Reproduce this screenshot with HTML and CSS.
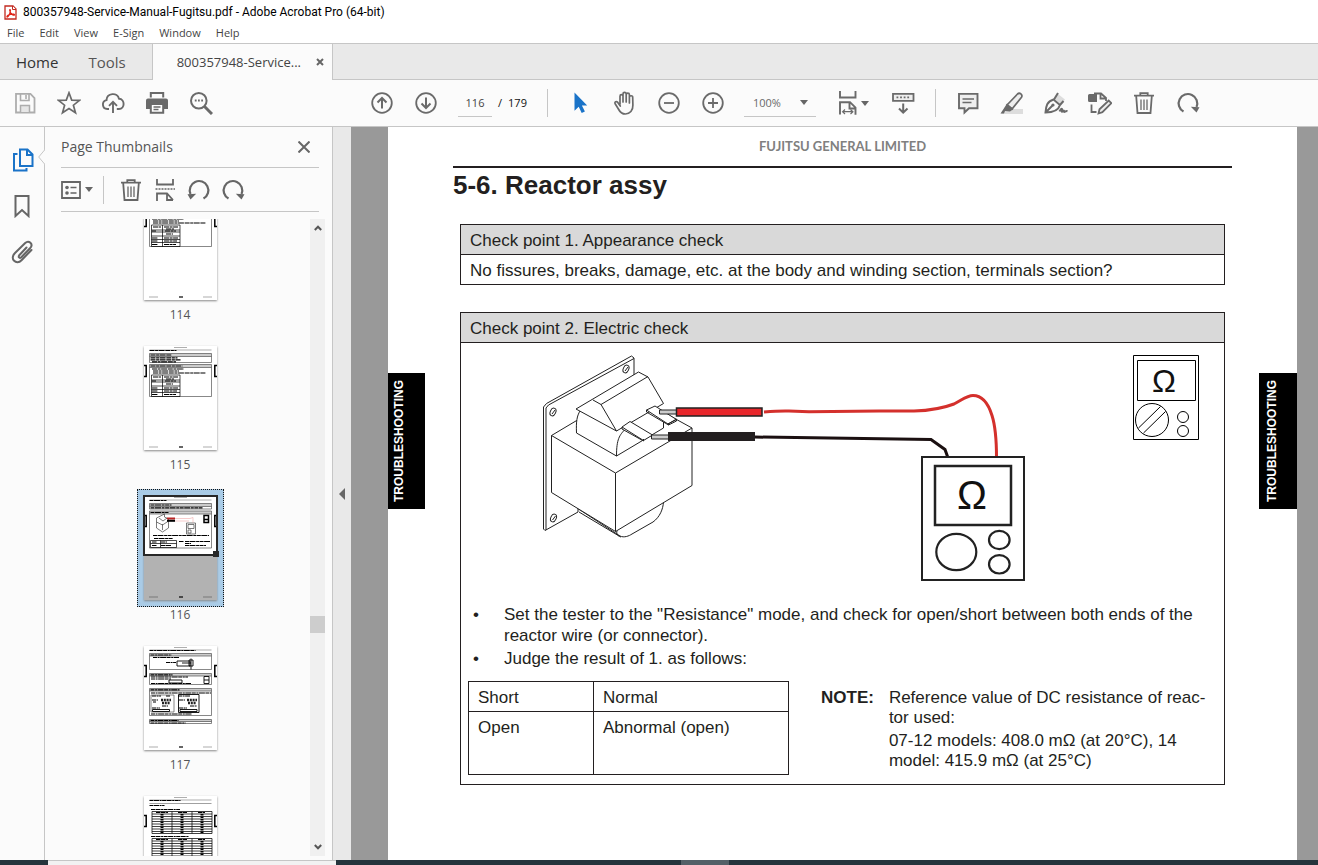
FILE: index.html
```html
<!DOCTYPE html>
<html lang="en">
<head>
<meta charset="utf-8">
<title>800357948-Service-Manual-Fugitsu.pdf - Adobe Acrobat Pro (64-bit)</title>
<link rel="stylesheet" href="styles.css">
</head>
<body>
<svg class="defs" aria-hidden="true">
  <defs>
    <symbol id="i-trash" viewBox="0 0 24 24"><g fill="none" stroke="currentColor" stroke-width="1.8"><path d="M2 4.700h20M8.300 4.500v-2.300h7.400v2.300M4.200 5l1.300 17h13l1.300-17"/><path stroke-width="1.300" d="M9 8.500v10.500M12 8.500v10.500M15 8.500v10.500"/></g></symbol>
    <symbol id="i-redo" viewBox="0 0 24 24"><path fill="none" stroke="currentColor" stroke-width="2.200" d="M7.500 20.500A9.300 9.300 0 1 1 20.500 16"/><path fill="currentColor" d="M14.800 15.800l8.700.5-3 5.200z"/></symbol>
    <symbol id="p-frame" viewBox="0 0 73 104">
      <path fill="#fff" d="M0 0h73v104H0z"/>
      <path stroke="#777" stroke-width=".6" d="M30 1.500h13M5 101h9M59 101h9M5.500 4h62"/>
      <path stroke="#000" stroke-width="1.200" d="M35 101h4"/>
      <path fill="none" stroke="#000" stroke-width="1.500" d="M0 19.500h2.200v11H0M73 19.500h-2.200v11h2.200"/>
    </symbol>
    <symbol id="p-spec" viewBox="0 0 73 104">
      <use href="#p-frame"/>
      <path fill="#ccc" d="M5.500 7.500h62v3h-62zM5.500 18.500h62v3h-62z"/>
      <path fill="none" stroke="#555" stroke-width=".7" d="M5.500 7.500h62v9h-62zM5.500 10.500h62M5.500 18.500h62v32h-62zM5.500 21.500h62"/>
      <path fill="none" stroke="#000" stroke-width="1.200" stroke-dasharray="5 .6 3 .5 6 .7" d="M5.500 4.500h27M6.500 9h21M6.500 11.800h27M6.500 13.800h30M8 15.800h24M6.500 20h32M8 23h32M9 25h26M9 27h53M9 31h8M20 31h14M22 33h8M8 35h4M21 35h11M22 38h7M8 42h6M20 42h14M8 45h6M20 45h13M8 48.500h6M20 48.500h12"/>
      <path fill="none" stroke="#000" stroke-width=".7" d="M7.500 29h28.500v21.500H7.500zM18.500 29v21.500M7.500 34h28.500M7.500 36h28.500M7.500 40h28.500M7.500 43.500h28.500M7.500 46.500h28.500"/>
    </symbol>
    <symbol id="p-reactor" viewBox="0 0 73 104">
      <use href="#p-frame"/>
      <path fill="#ccc" d="M5.500 7.500h62v3h-62zM5.500 15h62v3h-62z"/>
      <path fill="none" stroke="#555" stroke-width=".7" d="M5.500 7.500h62v5.500h-62zM5.500 10.500h62M5.500 15h62v37h-62zM5.500 18h62"/>
      <path fill="none" stroke="#000" stroke-width="1.200" stroke-dasharray="4 .5 6 .6 3 .5" d="M5.500 4.500h17M6.500 9h21M6.500 11.800h52M6.500 16.500h18M9 39.500h56M10 42.500h19M8 46h5M17 46h6M35 45.500h5M41 45.500h25M41 47.500h6M41 49.500h21M8 49.500h5M17 49.500h10"/>
      <path fill="none" stroke="#000" stroke-width=".7" d="M6.500 44.500h26v7h-26zM16.500 44.500v7M6.500 47.500h26"/>
      <path fill="none" stroke="#444" stroke-width=".7" d="M12.500 22l8-4v3l4 2v9l-6 4-6-4zM12.500 26l6 3 6-4M15 22l4 3 4-3M18.500 28v6M42.500 27h9v11h-9zM44 28.500h6v4h-6zM44 34h3v3h-3z"/>
      <path stroke="#b22" stroke-width="2" d="M23 22.500h8"/><path stroke="#000" stroke-width="2" d="M23 24.800h8"/><path fill="none" stroke="#e99" stroke-width=".5" d="M31 22.500h15l3-1v5M31 25h14"/>
      <path fill="none" stroke="#000" stroke-width="1.500" d="M60 19.500h4.500v7H60zM60 23.500h4"/>
    </symbol>
    <symbol id="p-motor" viewBox="0 0 73 104">
      <use href="#p-frame"/>
      <path fill="#ccc" d="M5.500 7.500h62v2.500h-62zM5.500 27.500h62v2.500h-62zM5.500 42.500h62v2.500h-62zM5.500 73.500h62v2.500h-62z"/>
      <path fill="none" stroke="#555" stroke-width=".7" d="M5.500 7.500h62v16h-62zM5.500 10h62M5.500 27.500h62v11h-62zM5.500 30h62M5.500 42.500h62v27h-62zM5.500 45h62M5.500 73.500h62v4h-62zM5.500 75.500h62M7 49h23v17H7z"/>
      <path fill="none" stroke="#000" stroke-width="1.200" stroke-dasharray="4 .6 2 .5 6 .5" d="M5.500 4.500h46M6.500 9h21M9 11.500h26M22 16.500h10M6.500 28.800h22M7 31h37M7 33h20M7 37.500h40M6.500 43.800h29M7 47h60M8 50h9M22 50h4M8 54h6M9 56h3M18 60h6M34 50h12M35 54h6M46 60h7M8 62h8M35 62h8M7 68h41M6.500 74.500h28M6.500 77h35"/>
      <path fill="none" stroke="#000" stroke-width=".9" d="M33 15h13v5H33zM38 17h9M47 12.500v11M45 14h4v6h-4zM25 34h13v3H25zM8.500 63.500h17v2h-17zM36 63.500h17v2H36zM60 30.500h5v7h-5zM60 34h5M34.500 48.500h20.500v18H34.500z"/>
      <path fill="none" stroke="#222" stroke-width="2.500" stroke-dasharray="2 .8" d="M17 54h10M18 57h8M43 54h10M44 57h8"/>
    </symbol>
    <symbol id="p-tables" viewBox="0 0 73 104">
      <use href="#p-frame"/>
      <path fill="none" stroke="#777" stroke-width=".7" d="M5.500 7.500h62"/>
      <path fill="none" stroke="#000" stroke-width="1.200" stroke-dasharray="4 .5 5 .6 2 .5" d="M5.500 4.500h31M5.500 9.500h15M7 13.500h29M7 40.500h38M12 16.500h12M34 16.500h9M54 16.500h7M12 43.500h12M34 43.500h9M54 43.500h7"/>
      <path fill="none" stroke="#111" stroke-width=".8" d="M8 15.500h60v22H8zM28 15.500v22M48 15.500v22M8 18h60M8 20.500h60M8 23h60M8 25.500h60M8 28h60M8 30.500h60M8 33h60M8 35.500h60M8 42.500h60v22H8zM28 42.500v22M48 42.500v22M8 45h60M8 47.500h60M8 50h60M8 52.500h60M8 55h60M8 57.500h60M8 60h60"/>
      <path fill="none" stroke="#000" stroke-width="3" stroke-dasharray="1.600 .9" d="M18 18v19M38 18v19M58 18v19M18 45v19M38 45v19M58 45v19"/>
    </symbol>
  </defs>
</svg>

<header class="titlebar">
  <svg class="app-icon" viewBox="0 0 13 15"><path fill="#fff" stroke="#c22a20" stroke-width="1.300" d="M1 1h8l3 3v10H1z"/><path fill="#fff" stroke="#c22a20" d="M8.500 1v3.500H12"/><path fill="none" stroke="#e02418" stroke-width="1.200" d="M6 4.500c-1 0 .3 3 1.200 4.200 1 1.300 3.300 2 3.300 1 0-1-4-.5-5.500.2-1.500.6-2.500 1.600-2 2.100.8.600 2.200-2.200 2.800-3.800C6.400 6.400 6.800 4.500 6 4.500z"/></svg>
  <span>800357948-Service-Manual-Fugitsu.pdf - Adobe Acrobat Pro (64-bit)</span>
</header>

<nav class="menubar" aria-label="Menu">
  <button>File</button><button>Edit</button><button>View</button><button>E-Sign</button><button>Window</button><button>Help</button>
</nav>

<div class="tabs">
  <button class="tab">Home</button>
  <button class="tab tab-tools">Tools</button>
  <div class="tab-doc">
    <button class="tab-name">800357948-Service...</button>
    <button class="tab-close" aria-label="Close tab"><svg viewBox="0 0 8 8"><path stroke="currentColor" stroke-width="2" d="M1 1l6 6M7 1L1 7"/></svg></button>
  </div>
</div>

<div class="toolbar">
  <div class="group group-file">
    <button class="tool dim" aria-label="Save"><svg viewBox="0 0 24 24"><path fill="none" stroke="currentColor" stroke-width="1.800" d="M3 2.900h14.500L21.500 7v14.500H3z"/><path fill="none" stroke="currentColor" stroke-width="1.600" d="M7.500 3v6.500h8.500V3M13 4v4"/><path fill="#e6e6e6" stroke="currentColor" stroke-width="1.500" d="M7.500 21v-6.500h9V21"/></svg></button>
    <button class="tool" aria-label="Star"><svg viewBox="0 0 24 24"><path fill="none" stroke="currentColor" stroke-width="1.700" stroke-linejoin="miter" d="M12 1.800l2.700 7.300 7.800.3-6.100 4.800 2.100 7.600-6.500-4.300-6.500 4.300 2.100-7.600L1.500 9.400l7.800-.3z"/></svg></button>
    <button class="tool" aria-label="Upload"><svg viewBox="0 0 24 24"><path fill="none" stroke="currentColor" stroke-width="1.900" d="M8 18H6.300a4.500 4.500 0 0 1-.8-8.900c.4-7.400 11-8 12.500-1.400 6.300.4 6 10.300 0 10.300h-2.200M12 22V11M8 14.800l4-4 4 4"/></svg></button>
    <button class="tool" aria-label="Print"><svg viewBox="0 0 24 24"><path fill="none" stroke="currentColor" stroke-width="2" d="M5.800 6.500V2h12.400v4.500"/><path fill="currentColor" d="M3 7.500h18a2 2 0 0 1 2 2V18H1V9.500a2 2 0 0 1 2-2z"/><path fill="#fff" stroke="currentColor" stroke-width="2" d="M5.800 13h12.400v8.800H5.800z"/><path stroke="currentColor" stroke-width="1.400" d="M8.500 16h7M8.500 18.500h5"/></svg></button>
    <button class="tool" aria-label="Search"><svg viewBox="0 0 24 24"><circle cx="9.800" cy="9.800" r="7.800" fill="none" stroke="currentColor" stroke-width="2"/><path stroke="currentColor" stroke-width="3" d="M15.500 15.500l7.500 7.500"/><path stroke="currentColor" stroke-width="1.800" stroke-dasharray="1.800 1.400" d="M5.800 9.500h9"/></svg></button>
  </div>
  <div class="group">
    <button class="tool" aria-label="Previous page"><svg viewBox="0 0 24 24"><g fill="none" stroke="currentColor" stroke-width="1.800"><circle cx="12" cy="12" r="9.800"/><path stroke-width="2" d="M12 17.500v-10M7.500 11.500L12 7l4.500 4.500"/></g></svg></button>
    <button class="tool" aria-label="Next page"><svg viewBox="0 0 24 24"><g fill="none" stroke="currentColor" stroke-width="1.800"><circle cx="12" cy="12" r="9.800"/><path stroke-width="2" d="M12 6.500v10M7.500 12.500L12 17l4.500-4.500"/></g></svg></button>
  </div>
  <div class="pager">
    <input id="page-no" type="text" value="116" aria-label="Page number">
    <label for="page-no"><span>/</span><span>179</span></label>
  </div>
  <span class="sep"></span>
  <div class="group">
    <button class="tool active" aria-label="Select"><svg viewBox="0 0 24 24"><path fill="currentColor" d="M5.500 1.500v18.200l4.200-4 3 6.300 3.200-1.400-3-6.200h5.300z"/></svg></button>
    <button class="tool" aria-label="Pan"><svg viewBox="0 0 24 24"><path fill="none" stroke="currentColor" stroke-width="1.700" stroke-linecap="round" stroke-linejoin="round" d="M7 13V5.200a1.500 1.500 0 0 1 3 0V11V3a1.500 1.500 0 0 1 3.200 0v8V3.800a1.500 1.500 0 0 1 3.200 0V12V6.300a1.500 1.500 0 0 1 3.300.2l.2 7.500c.2 5.500-3 9-7.500 9-4 0-5.500-2-7-5L2 12.500c-.6-1.800 1.400-2.600 2.600-1.300L7.300 15"/></svg></button>
    <button class="tool" aria-label="Zoom out"><svg viewBox="0 0 24 24"><g fill="none" stroke="currentColor" stroke-width="1.800"><circle cx="12" cy="12" r="9.800"/><path d="M7 12h10"/></g></svg></button>
    <button class="tool" aria-label="Zoom in"><svg viewBox="0 0 24 24"><g fill="none" stroke="currentColor" stroke-width="1.800"><circle cx="12" cy="12" r="9.800"/><path d="M7 12h10M12 7v10"/></g></svg></button>
  </div>
  <div class="zoom"><select aria-label="Zoom level"><option>100%</option></select><span class="caret"></span></div>
  <div class="group">
    <button class="tool tool-menu" aria-label="Fit page"><svg viewBox="0 0 24 24"><g fill="none" stroke="currentColor" stroke-width="1.900"><path d="M4 0v6.500h15.500V0M4 23.500V11.200h10l5.500 5.500v7M13.500 11.500v6h6"/><path stroke-width="1.200" d="M6.500 20.700h10.500M9 18.500l-2.400 2.200L9 23M14.500 18.500l2.400 2.200-2.400 2.300"/></g></svg><span class="caret"></span></button>
    <button class="tool" aria-label="Scroll mode"><svg viewBox="0 0 24 24"><g fill="none" stroke="currentColor" stroke-width="1.800"><path fill="#eee" d="M2 2.900h20.500v7H2z"/><path stroke-dasharray="1.800 1.800" d="M5.500 6.400h13.500"/><path stroke-width="2" d="M12.200 12.500v9M8 17.500l4.200 4.200 4.300-4.200"/></g></svg></button>
  </div>
  <span class="sep sep-tight"></span>
  <div class="group">
    <button class="tool" aria-label="Comment"><svg viewBox="0 0 24 24"><g fill="#eee" stroke="currentColor" stroke-width="1.900"><path d="M3 2.900h18.500v14.300H13l-4.500 4.300v-4.300H3z"/><path stroke-width="1.400" d="M6.500 8h11.500M6.500 11.500h9"/></g></svg></button>
    <button class="tool" aria-label="Highlight"><svg viewBox="0 0 24 24"><path fill="#ddd" d="M6 18h17v5H1z"/><path fill="#eee" stroke="currentColor" stroke-width="1.700" d="M7 14L17.500 3c2.200-2 5.500.8 4 3.300L12 18z"/><path fill="currentColor" d="M7 12.500l6.500 5.500-3.500 2.500-5-.5-1 2.500H.500l3-4.500z"/></svg></button>
    <button class="tool" aria-label="Sign"><svg viewBox="0 0 24 24"><path fill="#ddd" d="M14 3l7 5.500-4.500 5L10.500 8z"/><g fill="none" stroke="currentColor" stroke-width="2"><path d="M1.500 21.500C2 15 3 10.500 9.500 8.500l6.500 5.500c-1.500 5-7 7.500-14.500 7.500zM1.500 21.500l7-7M10 8.500L14 2M15.500 14.500l4-4.500"/><path stroke-width="2" d="M15.500 20.500c2-4 3-3 2.500-.5s2-2 2 .2 1.500-.7 3.500 0"/></g><circle cx="9" cy="14" r="1.600" fill="currentColor"/></svg></button>
    <button class="tool" aria-label="Edit"><svg viewBox="0 0 24 24"><path fill="currentColor" d="M1.500 3H9v8H1.500A1.500 1.500 0 0 1 0 9.500v-5A1.500 1.500 0 0 1 1.500 3z"/><g fill="none" stroke="currentColor" stroke-width="1.800"><path d="M6 2.500h7l5 4.500v3M12.500 2.500v5h5.500M3.500 13.500v7.500h5"/><path fill="#eee" d="M10.500 22.500l1-4.200L20.700 9.500l2.700 2.700-9 9z"/></g></svg></button>
    <button class="tool" aria-label="Delete"><svg><use href="#i-trash"/></svg></button>
    <button class="tool" aria-label="Rotate"><svg><use href="#i-redo"/></svg></button>
  </div>
</div>

<main class="workspace">
  <nav class="rail" aria-label="Panels">
    <button class="active" aria-label="Page Thumbnails"><svg viewBox="0 0 24 24"><g fill="none" stroke="currentColor" stroke-width="2"><path d="M9 1.500h7.500l5 5V18H9zM16 2v5h5"/><path d="M6.500 6H3v16.500h12.500V20"/></g></svg></button>
    <button aria-label="Bookmarks"><svg viewBox="0 0 24 24"><path fill="none" stroke="currentColor" stroke-width="2" d="M4.500 2h13v20L11 16l-6.500 6z"/></svg></button>
    <button aria-label="Attachments"><svg viewBox="0 0 24 24"><path fill="none" stroke="currentColor" stroke-width="2" stroke-linecap="round" d="M15.500 7.500l-7 7.500c-1.700 2-.2 3.800 1.800 2.200l8.700-8.900c4-4.300-1.300-8.500-4.800-5.200L4 13c-6 6 1.500 12.500 6.500 7.200L20.500 10"/></svg></button>
    <svg class="notch" viewBox="0 0 7 16"><path fill="#fbfbfb" stroke="#c6c6c6" d="M7 .5L.7 8 7 15.500"/></svg>
  </nav>

  <aside class="panel">
    <div class="panel-head"><h2>Page Thumbnails</h2><button aria-label="Close panel"><svg viewBox="0 0 12 12"><path stroke="currentColor" stroke-width="2" d="M.5.5l11 11M11.500.5l-11 11"/></svg></button></div>
    <div class="panel-tools">
      <button class="options" aria-label="Options"><svg viewBox="0 0 20 18"><path fill="none" stroke="currentColor" stroke-width="1.800" d="M1 1h18v16H1z"/><path stroke="currentColor" stroke-width="1.500" d="M9.500 6.500h6M9.500 12h6"/><circle cx="6" cy="6.500" r="1.800" fill="currentColor"/><circle cx="6" cy="12" r="1.800" fill="currentColor"/></svg><span class="caret"></span></button>
      <span class="panel-sep"></span>
      <button aria-label="Delete pages"><svg><use href="#i-trash"/></svg></button>
      <button aria-label="Split pages"><svg viewBox="0 0 24 24"><g fill="none" stroke="currentColor" stroke-width="1.800"><path d="M4 1v5.500h16V1M4 23v-7.500h10l6 6.500M14 16v6h6"/><path stroke-width="1.500" stroke-dasharray="2 1" d="M2.500 11h19.500"/></g></svg></button>
      <button class="flip" aria-label="Rotate left"><svg><use href="#i-redo"/></svg></button>
      <button aria-label="Rotate right"><svg><use href="#i-redo"/></svg></button>
    </div>
    <div class="thumb-area">
      <ol class="thumbs">
        <li><button class="thumb" aria-label="Page 114"><svg><use href="#p-spec"/></svg></button><span>114</span></li>
        <li><button class="thumb" aria-label="Page 115"><svg><use href="#p-spec"/></svg></button><span>115</span></li>
        <li class="selected"><button class="thumb" aria-label="Page 116"><svg><use href="#p-reactor"/></svg><i class="shade"></i><i class="view"></i></button><span>116</span></li>
        <li><button class="thumb" aria-label="Page 117"><svg><use href="#p-motor"/></svg></button><span>117</span></li>
        <li><button class="thumb" aria-label="Page 118"><svg><use href="#p-tables"/></svg></button></li>
      </ol>
      <div class="scrollbar">
        <svg viewBox="0 0 8 6"><path fill="none" stroke="#555" stroke-width="2" d="M.8 5L4 1.700 7.200 5"/></svg>
        <i class="grip"></i>
        <svg viewBox="0 0 8 6"><path fill="none" stroke="#555" stroke-width="2" d="M.8 1L4 4.300 7.200 1"/></svg>
      </div>
    </div>
  </aside>

  <button class="splitter" aria-label="Collapse panel"><svg viewBox="0 0 6 12"><path fill="#666" d="M6 0v12L0 6z"/></svg></button>

  <section class="viewer">
    <article class="page">
      <p class="brand">FUJITSU GENERAL LIMITED</p>
      <h1>5-6. Reactor assy</h1>
      <section class="check">
        <h3>Check point 1. Appearance check</h3>
        <p class="check-text">No fissures, breaks, damage, etc. at the body and winding section, terminals section?</p>
      </section>
      <section class="check">
        <h3>Check point 2. Electric check</h3>
        <svg class="figure" viewBox="461 343 763 260" role="img" aria-label="Reactor measured with a tester">
          <g fill="#fff" stroke="#222" stroke-width="1" stroke-linejoin="round">
            <path d="M578 512l-33 18.500-1.500-1.500V407l3-3.500 85-47.500 2.500 2v66l-56 60z"/>
            <path fill="none" d="M546 530V408l2.500-3L634 358.500"/>
            <ellipse cx="553" cy="412" rx="2.700" ry="4" transform="rotate(25 553 412)"/><ellipse cx="626" cy="369" rx="2.700" ry="4" transform="rotate(25 626 369)"/><ellipse cx="553.500" cy="518" rx="2.700" ry="4" transform="rotate(25 553.500 518)"/>
            <path fill="none" d="M552 414l3-4M625 371l3-4M552.500 520l3-4"/>
            <path d="M577 508l43 28c4 2 9 0 12-2l21-12c7-5 10-13 10.500-20z"/>
            <path fill="none" d="M579 512l40 24M617 531c-1 3 1 5 4 6"/>
            <path d="M551.500 435.500l26-15.500 60-22 54.500 30v57.500l-76.500 46-64-39z"/>
            <path fill="none" d="M551.500 435.500l64 37.500 76.500-45M615.500 473v58.500"/>
            <path stroke="none" d="M580 411c-3 5-4 10-3.500 22l40 23 47-28v-30z"/>
            <path fill="none" d="M580 411c-3 5-4 10-3.500 22l40 23 47-28v-6"/>
            <path fill="none" d="M616.500 456c0-17 3-21 9-27"/>
            <path d="M576 409l62.500-37 9.500 5 15.500 26.500L616.500 431z"/>
            <path fill="none" d="M593 400l8 4.500 15.500 26.500M601 404.500l47-28"/>
            <path d="M622 427l8-5.500 22.500 13.500-9 5.500zM622 427v2l21.500 12v-2M646.500 410l8.500-4 21.500 13.500-8.500 4.500z"/>
            <path fill="none" d="M646.500 410v2l22 13v-2M668 424l8.500-5v2l-8 4"/>
          </g>
          <path fill="#ccc" stroke="#222" d="M659.500 410h17v4h-17zM651.500 435h17v4h-17z"/>
          <path fill="#e8262b" stroke="#222" stroke-width="1.500" d="M676.500 408h85.500v8h-85.500z"/>
          <path fill="#231f20" d="M668 432h87v9h-87z"/>
          <path fill="none" stroke="#d4302c" stroke-width="3" d="M764 412c12-1 16-1.300 25-1l20 .7 70-.7h35c17-.5 27-2 40-7 8-4 13-8.500 19-8.500 8 0 15 7 19 20 3.500 11 4.500 25 4.500 42"/>
          <path fill="none" stroke="#1b1011" stroke-width="3" d="M755 437l176 2.500 14 10 2.500 7"/>
          <path fill="#fff" stroke="#222" stroke-width="2" d="M922 457h102v123H922z"/>
          <path fill="none" stroke="#222" stroke-width="2.500" d="M935 466h76v59h-76z"/>
          <g fill="none" stroke="#222" stroke-width="2.200"><ellipse cx="956.300" cy="552" rx="20" ry="18.200"/><ellipse cx="999.300" cy="540" rx="10.300" ry="9.200"/><ellipse cx="999.300" cy="564.300" rx="10.300" ry="9.200"/></g>
          <text class="ohm ohm-lg" x="972" y="509">Ω</text>
          <g fill="none" stroke="#000"><path d="M1133.500 355.500h65v84h-65zM1137.500 360.500h58v40h-58z"/><circle cx="1152" cy="420" r="16.500"/><path d="M1160.500 406.500l-22 21.500M1165.500 411.500l-22 21.500"/><circle cx="1183" cy="417" r="5.500"/><circle cx="1183" cy="431" r="5.500"/></g>
          <text class="ohm ohm-sm" x="1164" y="392">Ω</text>
        </svg>
        <ul class="steps">
          <li>Set the tester to the "Resistance" mode, and check for open/short between both ends of the reactor wire (or connector).</li>
          <li>Judge the result of 1. as follows:</li>
        </ul>
        <div class="result">
          <table>
            <tr><td>Short</td><td>Normal</td></tr>
            <tr class="tall"><td>Open</td><td>Abnormal (open)</td></tr>
          </table>
          <dl class="note">
            <dt>NOTE:</dt>
            <dd><p>Reference value of DC resistance of reac-<br>tor used:</p><p>07-12 models: 408.0 mΩ (at 20°C), 14<br>model: 415.9 mΩ (at 25°C)</p></dd>
          </dl>
        </div>
      </section>
      <div class="side side-left"><span>TROUBLESHOOTING</span></div>
      <div class="side side-right"><span>TROUBLESHOOTING</span></div>
    </article>
  </section>
</main>

<footer class="taskbar"><span class="task-start"></span><span class="task-search"></span><span class="task-apps"></span><span class="task-open"></span></footer>
</body>
</html>
```
FILE: styles.css
```css
* { box-sizing: border-box; }
body {
  margin: 0;
  height: 100vh;
  display: flex;
  flex-direction: column;
  overflow: hidden;
  background: #fbfbfb;
  color: #444;
  font: 12px/16px "Open Sans", "Noto Sans", sans-serif;
}
button, input, select {
  font: inherit;
  color: inherit;
  background: none;
  border: 0;
  padding: 0;
  margin: 0;
}
svg { display: block; }
h1, h2, h3, p, ol, ul, dl, dd { margin: 0; padding: 0; }
.defs { position: absolute; width: 0; height: 0; }

.titlebar {
  display: flex;
  align-items: center;
  gap: 6px;
  height: 24px;
  padding-left: 4px;
  background: #fff;
  color: #000;
  font-family: Roboto, "Open Sans", sans-serif;
}
.app-icon { width: 13px; height: 15px; }
.menubar {
  display: flex;
  align-items: center;
  gap: 15px;
  height: 19px;
  padding: 0 0 2px 7px;
  background: #fff;
  font-size: 11px;
}

.tabs {
  display: flex;
  height: 37px;
  background: #e9e9e9;
  border-top: 1px solid #c6c6c6;
  border-bottom: 1px solid #c6c6c6;
  font-size: 15px;
}
.tab { padding: 0 14px 0 16px; color: #333; }
.tab-tools { padding-right: 26px; color: #555; }
.tab-doc {
  display: flex;
  align-items: center;
  justify-content: space-between;
  width: 181px;
  margin-bottom: -1px;
  padding: 0 8px 0 24px;
  background: #fbfbfb;
  border: 1px solid #c6c6c6;
  border-width: 0 1px;
  font-size: 13px;
}
.tab-close svg { width: 8px; height: 8px; color: #666; }

.toolbar {
  display: flex;
  align-items: center;
  height: 47px;
  padding-left: 3px;
  border-bottom: 1px solid #c6c6c6;
  color: #6a6a6a;
}
.group { display: flex; }
.group-file { margin-right: 137px; }
.tool {
  display: flex;
  align-items: center;
  justify-content: center;
  width: 44px;
  height: 40px;
}
.tool svg { width: 24px; height: 24px; flex: none; }
.dim { color: #adadad; }
.active { color: #1a73c8; }
.tool-menu { width: 52px; justify-content: flex-start; padding-left: 7px; gap: 1px; }
.caret {
  border: 4px solid transparent;
  border-top: 5px solid #666;
  border-bottom: 0;
}
.pager { display: flex; align-items: center; gap: 6px; margin-left: 10px; }
.pager input {
  width: 34px;
  height: 28px;
  border-bottom: 1px solid #c6c6c6;
  text-align: center;
  color: #444;
  font-size: 11px;
}
.pager label { display: flex; gap: 6px; color: #111; font-size: 11px; }
.sep { width: 1px; height: 28px; margin: 0 11px 0 20px; background: #c6c6c6; }
.sep-tight { margin: 0 10px; }
.zoom {
  display: flex;
  align-items: center;
  width: 72px;
  height: 28px;
  margin: 0 13px 0 9px;
  padding: 0 8px 0 9px;
  border-bottom: 1px solid #c6c6c6;
}
.zoom select { flex: 1; appearance: none; font-size: 11px; }

.workspace { display: flex; flex: 1; min-height: 0; }
.rail {
  position: relative;
  display: flex;
  flex-direction: column;
  gap: 22px;
  width: 45px;
  padding: 21px 10px 0 11px;
  border-right: 1px solid #c6c6c6;
  color: #666;
}
.rail button svg { width: 24px; height: 24px; }
.rail .active { color: #1a73c8; }
.notch { position: absolute; right: -1px; top: 22px; width: 7px; height: 16px; }

.panel {
  display: flex;
  flex-direction: column;
  width: 288px;
  padding: 0 7px 4px 16px;
  border-right: 1px solid #c6c6c6;
  color: #666;
}
.panel-head {
  display: flex;
  align-items: center;
  justify-content: space-between;
  height: 41px;
  margin-right: 6px;
  padding-right: 9px;
  border-bottom: 1px solid #c6c6c6;
}
.panel-head h2 { font-size: 14px; font-weight: 400; color: #555; }
.panel-head button svg { width: 12px; height: 12px; }
.panel-tools {
  display: flex;
  align-items: center;
  gap: 10px;
  height: 44px;
  margin-right: 6px;
  border-bottom: 1px solid #c6c6c6;
}
.panel-tools svg { width: 24px; height: 24px; }
.options { display: flex; align-items: center; gap: 4px; }
.panel-tools .options svg { width: 20px; height: 18px; }
.panel-sep { width: 1px; height: 28px; margin-right: 5px; background: #c6c6c6; }
.flip svg { transform: scaleX(-1); }

.thumb-area { display: flex; flex: 1; min-height: 0; margin-top: 7px; overflow: hidden; }
.thumbs { flex: 1; margin-top: -33px; padding-right: 11px; list-style: none; }
.thumbs li {
  display: flex;
  flex-direction: column;
  align-items: center;
  height: 150px;
}
.thumbs span { color: #555; }
.thumb {
  position: relative;
  padding: 6px;
  margin: 3px 0 0;
  border: 1px solid transparent;
}
.thumb svg { width: 73px; height: 104px; box-shadow: 0 1px 2px #888; }
.selected .thumb { background: #a9cbe6; border: 1px dotted #111; }
.shade { position: absolute; left: 6px; right: 6px; top: 66px; bottom: 6px; background: #0000004d; }
.view { position: absolute; left: 5px; top: 5px; width: 75px; height: 61px; border: 2px solid #282828; }
.view::after { content: ""; position: absolute; right: -3px; bottom: -3px; width: 6px; height: 6px; background: #282828; }
.scrollbar {
  display: flex;
  flex-direction: column;
  align-items: center;
  width: 15px;
  padding: 6px 0;
  background: #f0f0f0;
}
.scrollbar svg { width: 8px; height: 6px; }
.grip { width: 15px; height: 17px; margin: 385px 0 auto; background: #cdcdcd; }

.splitter { display: flex; align-items: center; justify-content: center; width: 18px; background: #e9e9e9; }
.splitter svg { width: 6px; height: 12px; }

.viewer { flex: 1; padding: 0 21px 0 37px; background: #999; overflow: hidden; }
.page {
  position: relative;
  height: 100%;
  padding: 9px 65px 0;
  background: #fff;
  color: #231f20;
  font: 17px/20px "Liberation Sans", Arial, sans-serif;
}
.brand {
  height: 32px;
  border-bottom: 2px solid #231f20;
  text-align: center;
  color: #808080;
  font: 700 13px/20px Lato, "Open Sans", sans-serif;
}
.page h1 { padding-top: 2px; font-size: 26px; line-height: 30px; }
.check { margin: 24px 7px 27px; border: 1px solid #231f20; }
.check h3 {
  padding: 6px 9px 3px;
  border-bottom: 1px solid #231f20;
  background: #d9d9d9;
  font-size: 17px;
  font-weight: 400;
}
.check-text { padding: 6px 9px 3px; }
.figure { width: 100%; height: auto; }
.ohm { font-family: "Liberation Sans", Arial, sans-serif; text-anchor: middle; fill: #111; }
.ohm-lg { font-size: 40px; }
.ohm-sm { font-size: 32px; }
.steps { padding: 1px 24px 0 43px; line-height: 21px; list-style: none; }
.steps li { position: relative; margin-bottom: 2px; }
.steps li::before { content: "•"; position: absolute; left: -31px; }
.result { display: flex; align-items: flex-start; gap: 32px; padding: 10px 8px 9px 7px; }
.result table { width: 321px; border-collapse: collapse; }
.result td { height: 30px; padding: 6px 9px 3px; border: 1px solid #231f20; vertical-align: top; }
.result td:first-child { width: 125px; }
.result .tall td { height: 63px; }
.note { display: flex; flex: 1; gap: 15px; padding-top: 7px; }
.note dt { font-weight: 700; }
.note dd { flex: 1; }
.note p + p { margin-top: 3px; }
.side {
  position: absolute;
  top: 246px;
  display: flex;
  align-items: center;
  width: 38px;
  height: 136px;
  background: #000;
  color: #fff;
  font-size: 12px;
  font-weight: 700;
}
.side span { writing-mode: vertical-rl; transform: rotate(180deg); margin: 0 auto; }
.side-left { left: 0; width: 37px; padding-right: 15px; }
.side-right { right: 0; padding-right: 13px; }

.taskbar { display: flex; height: 5px; background: #25343c; }
.task-start { width: 48px; }
.task-search { width: 288px; background: #f2f2f2; border-top: 1px solid #c6c6c6; }
.task-apps { width: 345px; }
.task-open { width: 48px; background: #536067; }
```
